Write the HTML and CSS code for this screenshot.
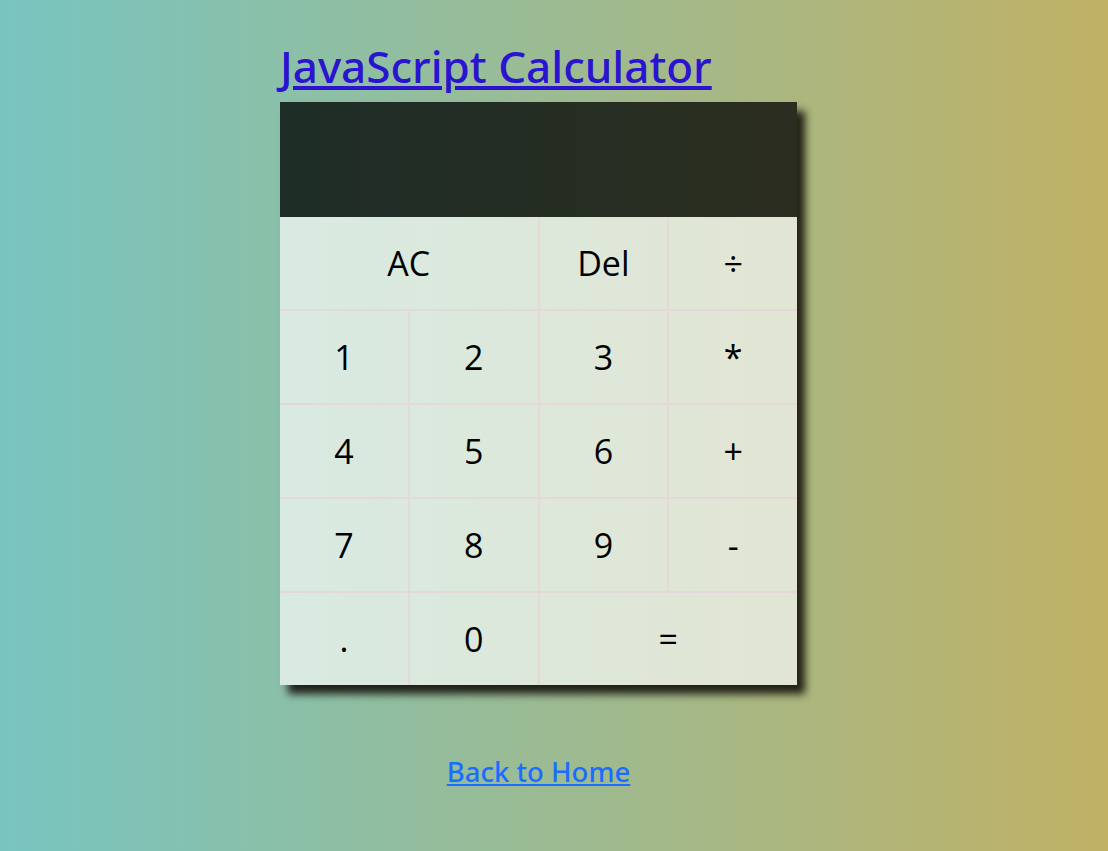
FILE: index.html
```html
<!DOCTYPE html>
<html lang="en">
<head>
<meta charset="utf-8">
<title>JavaScript Calculator</title>
<link rel="stylesheet" href="styles.css">
</head>
<body>
<main class="page">
  <h1 class="title"><a href="#">JavaScript Calculator</a></h1>
  <div class="calculator">
    <div class="display">
      <div class="previous"></div>
      <div class="current"></div>
    </div>
    <div class="keys">
      <button class="key span-two">AC</button>
      <button class="key">Del</button>
      <button class="key">÷</button>
      <button class="key">1</button>
      <button class="key">2</button>
      <button class="key">3</button>
      <button class="key">*</button>
      <button class="key">4</button>
      <button class="key">5</button>
      <button class="key">6</button>
      <button class="key">+</button>
      <button class="key">7</button>
      <button class="key">8</button>
      <button class="key">9</button>
      <button class="key">-</button>
      <button class="key">.</button>
      <button class="key">0</button>
      <button class="key span-two">=</button>
    </div>
  </div>
  <div class="home"><a href="#">Back to Home</a></div>
</main>
</body>
</html>
```
FILE: styles.css
```css
html, body {
  margin: 0;
  padding: 0;
  min-height: 100%;
}
body {
  min-height: 851px;
  background: linear-gradient(to right, #78c5c0, #c0b165);
  font-family: "Open Sans", "Noto Sans", sans-serif;
}
.page {
  width: 517px;
  margin-left: 280px;
  padding-top: 36px;
}
.title {
  margin: 0;
  font-family: "Noto Sans", "Open Sans", sans-serif;
  font-size: 44px;
  font-weight: 500;
  line-height: 60px;
  height: 66px;
  white-space: nowrap;
}
.title a {
  color: #2a14d0;
}
.calculator {
  width: 517px;
  box-shadow: 8px 9px 8px rgba(20, 15, 10, 0.9);
}
.display {
  height: 115px;
  background: linear-gradient(to right, #1f2d28, #2b2d1f);
}
.keys {
  display: grid;
  grid-template-columns: repeat(4, 1fr);
  grid-auto-rows: 92px;
  gap: 2px;
  background: #e4d8d8;
}
.key {
  border: none;
  margin: 0;
  padding: 0;
  font-family: inherit;
  font-size: 34px;
  color: #000;
  background: linear-gradient(to right, #d8eae2, #e2e5d3);
  background-attachment: fixed;
  background-size: 517px 100%;
  background-position: 280px 0;
  cursor: pointer;
}
.span-two {
  grid-column: span 2;
}
.home {
  text-align: center;
  margin-top: 68px;
  font-family: "Noto Sans", "Open Sans", sans-serif;
  font-size: 27.5px;
  font-weight: 500;
}
.home a {
  color: #1a6dff;
}
```
